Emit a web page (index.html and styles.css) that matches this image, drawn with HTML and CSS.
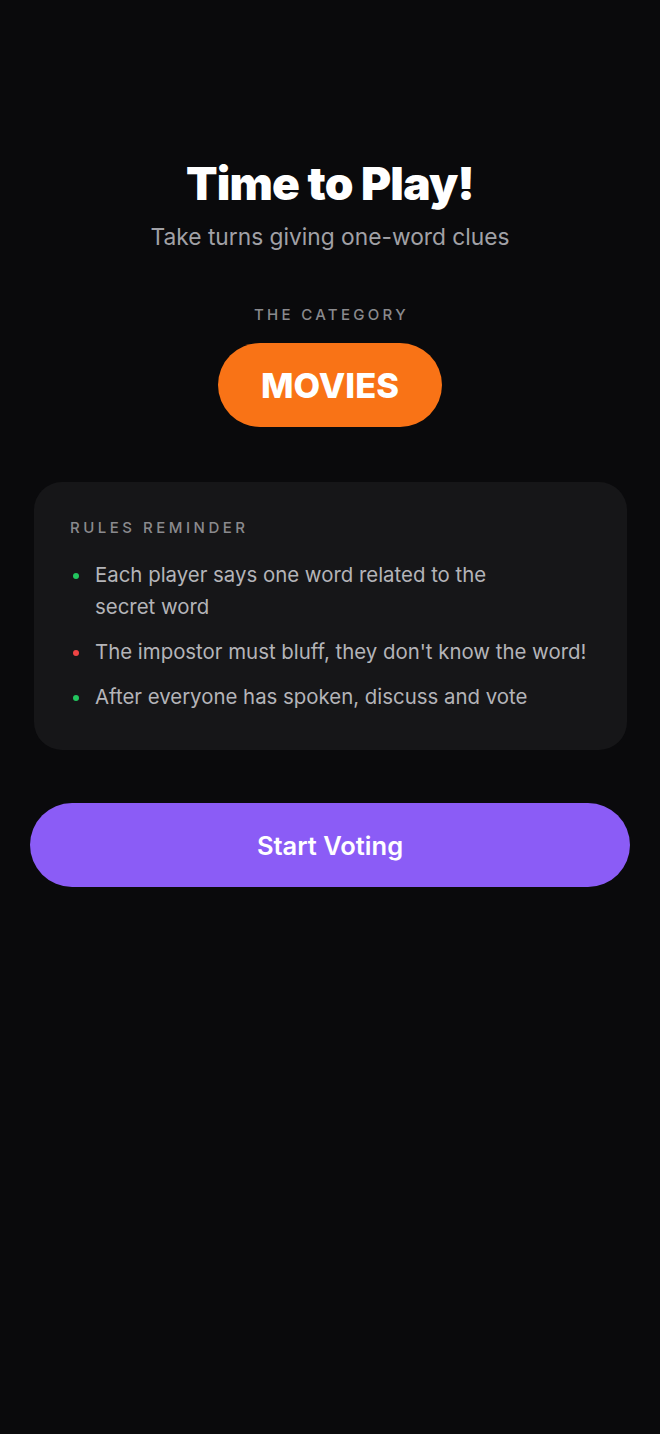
FILE: index.html
```html
<!DOCTYPE html>
<html>
<head>
<meta charset="utf-8">
<link rel="stylesheet" href="styles.css">
</head>
<body>
<main class="screen">
  <header class="hero">
    <h1 class="title">Time to Play!</h1>
    <p class="subtitle">Take turns giving one-word clues</p>
  </header>
  <section class="category">
    <div class="category-label">THE CATEGORY</div>
    <div class="category-pill">MOVIES</div>
  </section>
  <section class="rules">
    <div class="rules-label">RULES REMINDER</div>
    <ul class="rules-list">
      <li class="rule"><span class="dot dot-green"></span><span class="rule-text">Each player says one word related to the<br>secret word</span></li>
      <li class="rule"><span class="dot dot-red"></span><span class="rule-text">The impostor must bluff, they don't know the word!</span></li>
      <li class="rule"><span class="dot dot-green"></span><span class="rule-text">After everyone has spoken, discuss and vote</span></li>
    </ul>
  </section>
  <button class="cta">Start Voting</button>
</main>
</body>
</html>
```

FILE: styles.css
```css
html, body {
  margin: 0;
  padding: 0;
  background: #0a0a0c;
}
body {
  font-family: Inter, "Noto Sans", sans-serif;
  color: #fff;
  min-height: 1434px;
}
.screen {
  display: flex;
  flex-direction: column;
  align-items: center;
  padding: 155px 30px 0;
}
.hero {
  display: flex;
  flex-direction: column;
  align-items: center;
}
.title {
  margin: 0;
  font-size: 46px;
  line-height: 56px;
  font-weight: 900;
  letter-spacing: -0.8px;
  color: #fff;
}
.subtitle {
  margin: 11px 0 0;
  font-size: 22.75px;
  line-height: 30px;
  color: #a1a1a6;
  font-weight: 400;
}
.category {
  margin-top: 53px;
  display: flex;
  flex-direction: column;
  align-items: center;
}
.category-label {
  font-size: 15px;
  line-height: 20px;
  letter-spacing: 3.3px;
  font-weight: 500;
  color: #8a8a8e;
  padding-left: 3px;
}
.category-pill {
  margin-top: 18px;
  background: #f97316;
  color: #fff;
  border-radius: 42px;
  width: 224px;
  height: 84px;
  display: flex;
  align-items: center;
  justify-content: center;
  font-size: 34.5px;
  font-weight: 800;
  letter-spacing: 0;
}
.rules {
  margin-top: 55px;
  align-self: stretch;
  margin-left: 4px;
  margin-right: 3px;
  background: #161618;
  border-radius: 28px;
  padding: 37px 36px 37px;
}
.rules-label {
  font-size: 15px;
  line-height: 18px;
  letter-spacing: 3.5px;
  font-weight: 500;
  color: #8a8a8e;
}
.rules-list {
  list-style: none;
  margin: 22px 0 0;
  padding: 0;
  display: flex;
  flex-direction: column;
  gap: 13px;
}
.rule {
  display: flex;
  align-items: flex-start;
  gap: 16px;
}
.dot {
  width: 6px;
  height: 6px;
  border-radius: 50%;
  flex: none;
  margin-top: 14px;
  margin-left: 3px;
}
.dot-green { background: #22c55e; }
.dot-red { background: #ef4444; }
.rule-text {
  font-size: 20.4px;
  line-height: 32px;
  color: #b4b4b8;
}
.cta {
  margin-top: 53px;
  align-self: stretch;
  height: 84px;
  border: none;
  border-radius: 42px;
  background: #8b5cf6;
  color: #fff;
  font-family: Inter, "Noto Sans", sans-serif;
  font-size: 25.5px;
  font-weight: 600;
}
```
